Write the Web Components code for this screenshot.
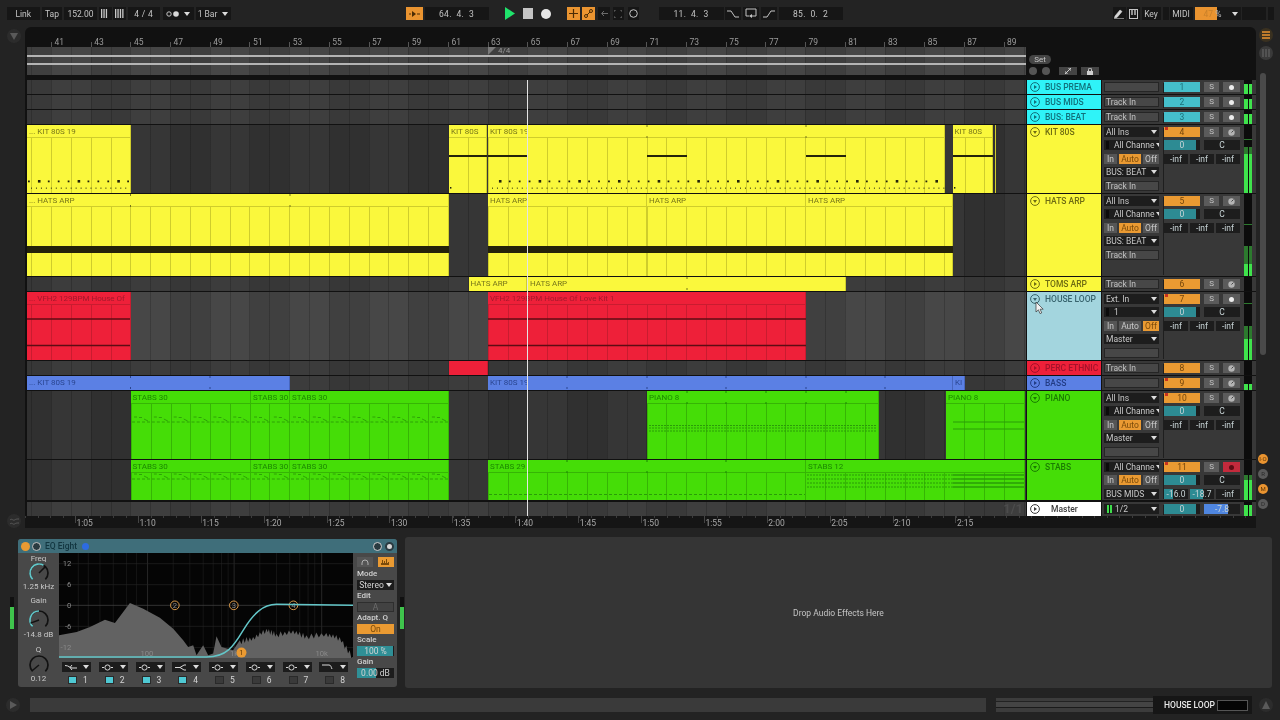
<!DOCTYPE html>
<html>
<head>
<meta charset="utf-8">
<title>Live set</title>
<style>
  html, body { margin: 0; padding: 0; background: #232323; overflow: hidden; }
</style>
</head>
<body>
<live-set>
  <top-bar></top-bar>
  <arrange-view>
    <track-row name="BUS PREMA" tint="cyan" h="14" lane="bus" inputs="~" num="1" numtint="cyan" arm="on" level="10"></track-row>
    <track-row name="BUS MIDS" tint="cyan" h="14" lane="bus" inputs="~Track In" num="2" numtint="cyan" arm="on" level="10"></track-row>
    <track-row name="BUS: BEAT" tint="cyan" h="14" lane="bus" inputs="~Track In" num="3" numtint="cyan" arm="on" level="10"></track-row>

    <track-row name="KIT 80S" tint="yellow" h="68" open inputs="All Ins|#All Channe|iao:Auto|BUS: BEAT|~Track In" num="4" mark arm="off" level="39" dim="7" peak="14" pan sends="-inf|-inf|-inf">
      <arr-clip from="27" to="130.5" tint="yellow" dots="full">... KIT 80S 19</arr-clip>
      <arr-clip from="449" to="486.5" tint="yellow" dots="one" lines="31:2:449-487">KIT 80S</arr-clip>
      <arr-clip from="488" to="945" tint="yellow" dots="full" ticks="647,806" lines="31:2:488-527,647-687,806-846">KIT 80S 19</arr-clip>
      <arr-clip from="952.5" to="993" tint="yellow" dots="one" lines="31:2:952-993">KIT 80S</arr-clip>
      <arr-clip from="994.5" to="996" tint="yellow"></arr-clip>
    </track-row>

    <track-row name="HATS ARP" tint="yellow" h="82" open inputs="All Ins|#All Channe|iao:Auto|BUS: BEAT|~Track In" num="5" arm="off" level="12" dim="18" peak="30" pan sends="-inf|-inf|-inf">
      <arr-clip from="27" to="449" tint="yellow" ticks="130.5,290" lines="55.5:7:27-449">... HATS ARP</arr-clip>
      <arr-clip from="488" to="647" tint="yellow" lines="55.5:7:488-647">HATS ARP</arr-clip>
      <arr-clip from="647" to="806" tint="yellow" lines="55.5:7:647-806">HATS ARP</arr-clip>
      <arr-clip from="806" to="952.5" tint="yellow" lines="55.5:7:806-953">HATS ARP</arr-clip>
    </track-row>

    <track-row name="TOMS ARP" tint="yellow" h="14" lane="mid" inputs="~Track In" num="6" arm="off">
      <arr-clip from="468.5" to="527" tint="yellow">HATS ARP</arr-clip>
      <arr-clip from="528" to="846" tint="yellow" ticks="687">HATS ARP</arr-clip>
    </track-row>

    <track-row name="HOUSE LOOP" tint="house" h="68" lane="light" open inputs="Ext. In|#1|iao:Off|Master|~" num="7" mark arm="on" level="21" dim="13" peak="11" pan sends="-inf|-inf|-inf">
      <arr-clip from="27" to="130.5" tint="red" lines="27:1.5:27-130;53.5:1.5:27-130">... VFH2 129BPM House Of</arr-clip>
      <arr-clip from="488" to="806" tint="red" lines="27:1.5:488-806;53.5:1.5:488-806">VFH2 129BPM House Of Love Kit 1</arr-clip>
    </track-row>

    <track-row name="PERC ETHNIC" tint="red" h="14" lane="mid" inputs="~Track In" num="8" arm="off">
      <arr-clip from="449" to="488" tint="red"></arr-clip>
    </track-row>

    <track-row name="BASS" tint="blue" h="14" lane="mid" inputs="~" num="9" mark arm="off" level="6">
      <arr-clip from="27" to="289.5" tint="blue" ticks="130.5,210">... KIT 80S 19</arr-clip>
      <arr-clip from="488" to="953" tint="blue" ticks="567,647,726,806,885">KIT 80S 19</arr-clip>
      <arr-clip from="953" to="965" tint="blue">KI</arr-clip>
    </track-row>

    <track-row name="PIANO" tint="green" h="68" open inputs="All Ins|#All Channe|iao:Auto|Master|~" num="10" mark arm="off" pan sends="-inf|-inf|-inf">
      <arr-clip from="130.5" to="251" tint="green" wave="26:31">STABS 30</arr-clip>
      <arr-clip from="251" to="290" tint="green" wave="26:31">STABS 30</arr-clip>
      <arr-clip from="290" to="449" tint="green" wave="26:31">STABS 30</arr-clip>
      <arr-clip from="647" to="879" tint="green" ticks="687,726,766,806,846" lines="34.5:1:649-877:2 1;37:1:649-877:2 1;40:1:649-877:2 1">PIANO 8</arr-clip>
      <arr-clip from="946" to="1025" tint="green" lines="31:1:953-1024;38:1:953-1024">PIANO 8</arr-clip>
    </track-row>

    <track-row name="STABS" tint="green" h="40" open inputs="#All Channe|iao:Auto|BUS MIDS" num="11" mark arm="red" level="20" dim="5" pan="short" sends="-16.0:38|-18.7:55|-inf" tight>
      <arr-clip from="130.5" to="251" tint="green" wave="14:19">STABS 30</arr-clip>
      <arr-clip from="251" to="290" tint="green" wave="14:19">STABS 30</arr-clip>
      <arr-clip from="290" to="449" tint="green" wave="14:19">STABS 30</arr-clip>
      <arr-clip from="488" to="806" tint="green" ticks="567,647,726" lines="34.5:1:489-805:3 2">STABS 29</arr-clip>
      <arr-clip from="806" to="1025" tint="green" lines="15:1:807-953:2 1;19:1:807-953:2 1;23:1:807-953:2 1;27:1:807-953:2 1;15:1.5:953-1024;19:1.5:953-1024;23:1.5:953-1024;27:1.5:953-1024">STABS 12</arr-clip>
    </track-row>

    <track-row name="Master" tint="white" h="14" lane="bus" master></track-row>
  </arrange-view>
  <detail-view><eq-eight></eq-eight></detail-view>
  <status-bar></status-bar>
</live-set>

<script>
const FONT = '"Roboto", "Liberation Sans", sans-serif';
const TINTS = {
  yellow: { bg: "#faf83c", line: "#cfcd2c", text: "#77761a", mark: "#24230a" },
  red: { bg: "#ee2039", line: "#c91c30", text: "#a3182b", mark: "#5e0c14" },
  blue: { bg: "#5b80e4", line: "#4766bd", text: "#2a4590", mark: "#25396f" },
  green: { bg: "#45dd07", line: "#36b505", text: "#1b8702", mark: "#2a9c08" },
};
const HEADS = {
  cyan: { bg: "#2ff3f8", text: "#11707a" },
  yellow: { bg: "#faf83c", text: "#6e6c12" },
  house: { bg: "#a3d5de", text: "#38646e" },
  red: { bg: "#ee2039", text: "#a5122a" },
  blue: { bg: "#5b80e4", text: "#223c85" },
  green: { bg: "#45dd07", text: "#1a7c02" },
  white: { bg: "#ffffff", text: "#3a3a3a" },
};
const LANES = {
  bus: ["#3e3e3e", "#393939"],
  dark: ["#363636", "#303030"],
  mid: ["#3c3c3c", "#373737"],
  light: ["#474747", "#404040"],
};
const DOWN = `<svg width="6" height="4" viewBox="0 0 6 4"><path d="M0 0h6L3 4z" fill="#dcdcdc"/></svg>`;

// bars are 19.85px wide, bar 41 sits at x=51
function barLines(from, color) {
  const p = (((51 - from) % 19.85) + 19.85) % 19.85;
  return `repeating-linear-gradient(90deg,${color} ${p}px,${color} ${p + 1}px,transparent ${p + 1}px,transparent ${p + 19.85}px)`;
}
function barBands(a, b) {
  const p = 24;
  return `repeating-linear-gradient(90deg,${a} ${p}px,${a} ${p + 39.7}px,${b} ${p + 39.7}px,${b} ${p + 79.4}px)`;
}

class LiveEl extends HTMLElement {
  constructor() {
    super();
    this.attachShadow({ mode: "open" });
  }
  connectedCallback() {
    this.render();
  }
}

class LiveSet extends LiveEl {
  render() {
    this.shadowRoot.innerHTML = `
      <style>
        :host { display: flex; flex-direction: column; width: 1280px; height: 720px; background: #232323; color: #c8c8c8; font-family: ${FONT}; font-size: 8.5px; position: relative; overflow: hidden; filter: blur(.3px); }
        svg { position: absolute; left: 1035px; top: 301px; }
      </style>
      <slot></slot>
      <svg width="9" height="14" viewBox="0 0 9 14"><path d="M1 1v10l2.4-2.2 1.6 3.8 1.7-.7-1.6-3.7h3.1z" fill="#f2f2f2" stroke="#333" stroke-width=".7"/></svg>`;
  }
}

class TopBar extends LiveEl {
  render() {
    const cell = (w, ml, txt, cls = "") => `<div class="c ${cls}" style="width:${w}px;margin-left:${ml}px">${txt}</div>`;
    const bars = (n) => `<svg width="9" height="9" viewBox="0 0 9 9">${[...Array(n)].map((_, i) => `<rect x="${i * 2.4}" y="0" width="1.3" height="9" fill="#c8c8c8"/>`).join("")}</svg>`;
    this.shadowRoot.innerHTML = `
      <style>
        :host { display: flex; height: 27px; box-sizing: border-box; padding-top: 7px; background: #232323; }
        .c { height: 13px; background: #161616; display: flex; align-items: center; justify-content: center; flex: none; font-size: 8.5px; color: #c4c4c4; white-space: nowrap; }
        .o { background: #ea9430; color: #3a2204; }
        .n { background: none; }
        .arrow { margin-left: 5px; display: flex; }
        pre { margin: 0; font: inherit; letter-spacing: .3px; }
      </style>
      ${cell(33.5, 6.5, "Link")}${cell(20, 2, "Tap")}${cell(33, 2, "152.00")}
      ${cell(13, 2, bars(3))}${cell(13, 1, bars(4))}
      ${cell(31.5, 2, "<pre>4 / 4</pre>")}
      ${cell(31, 3, `<svg width="13" height="6"><circle cx="3" cy="3" r="2.2" fill="none" stroke="#c4c4c4"/><circle cx="10" cy="3" r="2.8" fill="#d8d8d8"/></svg><span class="arrow">${DOWN}</span>`)}
      ${cell(35, 2, `1 Bar<span class="arrow">${DOWN}</span>`)}
      ${cell(16.5, 175.5, `<svg width="11" height="8"><path d="M0 4h2M8 4h3" stroke="#4a2c05"/><path d="M3 1l4 3-4 3z" fill="#4a2c05"/></svg>`, "o")}
      ${cell(64, 2, "<pre>64.  4.  3</pre>")}
      ${cell(10, 16, `<svg width="10" height="13"><path d="M0 0l10 6.5L0 13z" fill="#1fe36b"/></svg>`, "n")}
      ${cell(10, 8, `<svg width="10" height="11"><rect width="10" height="11" fill="#c4c4c4"/></svg>`, "n")}
      ${cell(10, 8, `<svg width="10" height="10"><circle cx="5" cy="5" r="5" fill="#e8e8e8"/></svg>`, "n")}
      ${cell(13, 16, `<svg width="9" height="9"><path d="M4.5 0v9M0 4.5h9" stroke="#4a2c05" stroke-width="1.2"/></svg>`, "o")}
      ${cell(13, 2, `<svg width="9" height="9"><circle cx="2" cy="7" r="1.5" fill="none" stroke="#4a2c05"/><circle cx="7" cy="2" r="1.5" fill="none" stroke="#4a2c05"/><path d="M3 6l3-3" stroke="#4a2c05"/></svg>`, "o")}
      ${cell(12, 3, `<svg width="8" height="7"><path d="M8 3.5H2M4 1L1.5 3.5 4 6" stroke="#6a6a6a" fill="none"/></svg>`)}
      ${cell(11, 3, `<svg width="8" height="8"><path d="M0 2V0h2M6 0h2v2M8 6v2H6M2 8H0V6" stroke="#6a6a6a" fill="none"/></svg>`)}
      ${cell(11, 4, `<svg width="9" height="9"><circle cx="4.5" cy="4.5" r="3.8" fill="none" stroke="#c4c4c4"/></svg>`)}
      ${cell(65, 20, "<pre>11.  4.  3</pre>")}
      ${cell(16, 1, `<svg width="12" height="8"><path d="M0 1h4l4 6h4" stroke="#c4c4c4" fill="none"/></svg>`)}
      ${cell(16, 2, `<svg width="12" height="11"><path d="M4 8H1V1h10v7H7" stroke="#c4c4c4" fill="none"/><path d="M7 6v4L4 8z" fill="#c4c4c4"/></svg>`)}
      ${cell(16, 2, `<svg width="12" height="8"><path d="M0 7h4l4-6h4" stroke="#c4c4c4" fill="none"/></svg>`)}
      ${cell(64, 2, "<pre>85.  0.  2</pre>")}
      ${cell(13, 270, `<svg width="10" height="10"><path d="M1 7l5-6 2 1.5-5 6-2.5.5zM0 9.6h10" stroke="#d8d8d8" fill="#d8d8d8" stroke-width=".6"/></svg>`)}
      ${cell(13, 1, `<svg width="9" height="10"><rect x=".5" y=".5" width="8" height="9" fill="none" stroke="#c4c4c4"/><path d="M3 0v6M6 0v6" stroke="#c4c4c4" stroke-width="1.4"/></svg>`)}
      ${cell(19, 2, "Key")}
      ${cell(6, 2, "")}
      ${cell(23, 1, "MIDI")}
      <div class="c" style="width:46px;margin-left:2px;justify-content:flex-start;background:linear-gradient(90deg,#ea9430 22px,#181818 22px)"><span style="margin-left:9px;color:#c9802a">47 <span style="color:#b8b8b8">%</span></span><span class="arrow" style="margin-left:11px">${DOWN}</span></div>
      ${cell(24, 1, "")}${cell(6, 2, "")}`;
  }
}

class ArrangeView extends LiveEl {
  render() {
    const tops = [];
    for (let b = 41; b <= 89; b += 2) tops.push(`<span>${b}</span>`);
    const times = ["1:05", "1:10", "1:15", "1:20", "1:25", "1:30", "1:35", "1:40", "1:45", "1:50", "1:55", "2:00", "2:05", "2:10", "2:15"].map((t) => `<span>${t}</span>`).join("");
    const bands = barBands("#464646", "#3f3f3f");
    this.shadowRoot.innerHTML = `
      <style>
        :host { display: flex; height: 501px; flex: none; position: relative; }
        .gutter { width: 25px; flex: none; display: flex; flex-direction: column; align-items: center; justify-content: space-between; padding: 2px 0 0 3px; box-sizing: border-box; }
        .round { width: 14px; height: 14px; border-radius: 50%; background: #2c2c2c; display: flex; align-items: center; justify-content: center; flex: none; }
        .panel { width: 1231px; flex: none; background: #111; border-radius: 6px 6px 0 0; display: flex; flex-direction: column; padding-left: 2px; box-sizing: border-box; position: relative; }
        .head { height: 53px; display: flex; flex: none; margin-left: -2px; }
        .time { width: 1001px; flex: none; }
        .ruler { height: 20px; display: flex; padding-left: 26px; font-size: 8.5px; color: #9a9a9a; }
        .ruler span { width: 39.7px; flex: none; box-sizing: border-box; padding: 10px 0 0 3.5px; line-height: 11px; height: 20px; background: linear-gradient(#555,#555) 0 bottom/1px 5px no-repeat; }
        .over { height: 28px; margin-left: 2px; width: 999px; background: ${barLines(27, "rgba(0,0,0,.16)")}, ${bands}; display: flex; flex-direction: column; position: relative; }
        .over i { display: block; height: 1.5px; background: #b4b4b4; margin-top: 8px; }
        .over i + i { margin-top: 6.5px; }
        .sig { position: absolute; left: 461px; top: 0; display: flex; gap: 2px; color: #9a9a9a; font-size: 8px; line-height: 8px; }
        .set { flex: 1; display: flex; flex-direction: column; padding: 27.5px 0 0 3px; box-sizing: border-box; }
        .pill { width: 22px; height: 9px; border-radius: 5px; background: #454545; color: #c4c4c4; font-size: 8px; line-height: 9px; text-align: center; }
        .btns { display: flex; align-items: center; margin-top: 3.5px; }
        .dot { width: 8px; height: 8px; border-radius: 50%; background: #555; margin-right: 5px; }
        .sq { width: 18px; height: 8px; background: #444; margin-right: 4px; display: flex; align-items: center; justify-content: center; }
        .rows { display: flex; flex-direction: column; gap: 1px; height: 436px; flex: none; }
        .times { height: 12px; display: flex; padding-left: 50px; margin-left: -2px; color: #a8a8a8; font-size: 8.5px; background: #151515; flex: none; background-image: repeating-linear-gradient(90deg,#3c3c3c 0 1px,transparent 1px 12.58px); background-size: 100% 2px; background-repeat: no-repeat; }
        .times span { width: 62.9px; flex: none; box-sizing: border-box; padding: 1px 0 0 1.5px; line-height: 12px; background: linear-gradient(#444,#444) 0 0/1px 7px no-repeat; height: 12px; }
        .play { position: absolute; left: 502px; top: 53px; width: 1px; height: 436px; background: #e4e4e4; }
        .rail { width: 24px; flex: none; display: flex; flex-direction: column; padding: 1px 0 0 3px; box-sizing: border-box; }
        .rail .round { background: #3a3a3a; }
        .scroll { width: 6px; height: 282px; margin: 13px 0 0 1px; border-radius: 3px; background: #4a4a4a; flex: none; }
        .led { width: 10px; height: 10px; border-radius: 50%; background: #5a5a5a; color: #2a2a2a; font-size: 6px; line-height: 10px; text-align: center; margin-top: 5px; margin-left: -1px; flex: none; }
        .led.on { background: #ea9430; color: #5a3305; }
      </style>
      <div class="gutter">
        <div class="round"><svg width="8" height="8"><path d="M0 1h8L4 8z" fill="#5a5a5a"/></svg></div>
        <div class="round" style="margin-bottom:0"><svg width="9" height="7"><path d="M0 2c2-2 3 1 4.5 0S7 1 9 1M0 6c2-2 3 1 4.5 0S7 5 9 5" stroke="#5a5a5a" fill="none"/></svg></div>
      </div>
      <div class="panel">
        <div class="head">
          <div class="time">
            <div class="ruler">${tops.join("")}</div>
            <div class="over"><i></i><i></i>
              <div class="sig"><svg width="8" height="8"><path d="M0 0h8L0 8z" fill="#7a7a7a"/></svg><span>4/4</span></div>
            </div>
          </div>
          <div class="set">
            <div class="pill">Set</div>
            <div class="btns">
              <div class="dot"></div><div class="dot" style="margin-right:9px"></div>
              <div class="sq"><svg width="6" height="6"><path d="M0 6l6-6M6 0H3M6 0v3M0 6h3M0 6V3" stroke="#cfcfcf" fill="none"/></svg></div>
              <div class="sq"><svg width="6" height="7"><rect y="3" width="6" height="4" fill="#cfcfcf"/><path d="M1.5 3V1.5a1.5 1.5 0 0 1 3 0V3" stroke="#cfcfcf" fill="none"/></svg></div>
            </div>
          </div>
        </div>
        <div class="rows"><slot></slot></div>
        <div class="times">${times}</div>
        <div class="play"></div>
      </div>
      <div class="rail">
        <div class="round" style="background:#3a3120"><svg width="8" height="8"><path d="M0 1h8M0 4h8M0 7h8" stroke="#ea9430" stroke-width="1.4"/></svg></div>
        <div class="round" style="margin-top:4px"><svg width="8" height="8"><path d="M1 0v8M4 0v8M7 0v8" stroke="#6a6a6a"/></svg></div>
        <div class="scroll"></div>
        <div class="led on" style="margin-top:99px">I·O</div>
        <div class="led">R</div>
        <div class="led on">M</div>
        <div class="led">D</div>
      </div>`;
  }
}

class TrackRow extends LiveEl {
  inputCell(spec) {
    if (spec.startsWith("iao:")) {
      const on = spec.slice(4);
      const w = { In: 13, Auto: 22, Off: 16 };
      return `<div class="iao">${["In", "Auto", "Off"].map((t) => `<b class="${t === on ? "act" : ""}" style="width:${w[t]}px">${t}</b>`).join("")}</div>`;
    }
    if (spec.startsWith("~")) return `<div class="box">${spec.slice(1)}</div>`;
    if (spec.startsWith("#")) return `<div class="dd ch"><u></u><span>${spec.slice(1)}</span><em>${DOWN}</em></div>`;
    return `<div class="dd"><span>${spec}</span><em>${DOWN}</em></div>`;
  }

  render() {
    const h = +this.getAttribute("h");
    const tint = this.getAttribute("tint");
    const head = HEADS[tint];
    const laneKey = this.getAttribute("lane") || "dark";
    const lane = LANES[laneKey];
    const isMaster = this.hasAttribute("master");
    const open = this.hasAttribute("open");
    const arrow = open ? `<path d="M3 4h4L5 7z" fill="${head.text}"/>` : `<path d="M4 3l3 2-3 2z" fill="${head.text}"/>`;
    const inputs = (this.getAttribute("inputs") || "").split("|").filter((s) => s !== "");
    const num = this.getAttribute("num");
    const cyan = this.getAttribute("numtint") === "cyan";
    const arm = this.getAttribute("arm");
    const armInner = arm === "red" ? `<i style="background:#5e0c14"></i>`
      : arm === "on" ? `<i style="background:#ececec"></i>`
      : `<svg width="7" height="7"><circle cx="3.5" cy="3.5" r="3.2" fill="#b4b4b4"/><path d="M3.5 3.5L5.5 1.5" stroke="#444"/></svg>`;
    const level = +this.getAttribute("level") || 0;
    const dim = +this.getAttribute("dim") || 0;
    const peak = this.getAttribute("peak");
    const sends = this.getAttribute("sends");
    const hasPan = this.hasAttribute("pan");
    const pan = hasPan ? `
      <div class="line">
        <div class="slider" style="width:36px;--fill:32px">0</div>
        <div class="slider plain" style="width:36px;margin-left:4px">C</div>
      </div>` : "";
    const sendRow = sends ? `<div class="line">${sends.split("|").map((s, i) => {
      const [t, fill] = s.split(":");
      return `<div class="slider ${fill ? "" : "plain"}" style="width:24px;margin-left:${i ? 2 : 0}px;--fill:${fill ? fill + "%" : "0"}">${t}</div>`;
    }).join("")}</div>` : "";

    const mixer = isMaster ? `
      <div class="inputs"><div class="dd" style="padding-left:0"><u style="width:5px;margin:0 3px 0 3px;background:linear-gradient(90deg,#3fdc4c 2px,#111 2px,#111 3px,#3fdc4c 3px)"></u><span>1/2</span><em>${DOWN}</em></div></div>
      <div class="main"><div class="line">
        <div class="slider" style="width:36px;--fill:32px">0</div>
        <div class="slider" style="width:36px;margin-left:4px;--fill:24px;--col:#4f86e0">-7.8</div>
      </div></div>` : `
      <div class="inputs">${inputs.map((s) => this.inputCell(s)).join("")}</div>
      <div class="main">
        <div class="line">
          <div class="num" style="background:${cyan ? "#45bfcb" : "#ea9a32"};color:${cyan ? "#1b6f78" : "#74450a"}">${this.hasAttribute("mark") ? "<s></s>" : ""}${num}</div>
          <div class="tog" style="width:15px;margin-left:4px">S</div>
          <div class="tog" style="width:17px;margin-left:4px;${arm === "red" ? "background:#c42a3c" : ""}">${armInner}</div>
        </div>
        ${pan}${sendRow}
      </div>`;

    const meterBright = isMaster ? 11 : level;
    this.shadowRoot.innerHTML = `
      <style>
        :host { display: flex; height: ${h}px; flex: none; ${isMaster ? "margin-top: 1px;" : ""} }
        .lane { width: 999px; flex: none; position: relative; overflow: hidden; background: ${barLines(27, "rgba(0,0,0,.18)")}, ${barBands(lane[0], lane[1])}; }
        .sig { position: absolute; right: 3px; top: 0; font-size: 13px; line-height: 14px; font-weight: 700; color: #4c4c4c; }
        .name { width: 74px; flex: none; margin-left: 1px; background: ${head.bg}; color: ${head.text}; display: flex; align-items: flex-start; padding: 2px 0 0 3px; box-sizing: border-box; font-size: 8.5px; line-height: 10px; font-weight: 500; white-space: nowrap; overflow: hidden; }
        .name svg { flex: none; margin-right: ${isMaster ? 11 : 5}px; }
        .mix { flex: none; width: 154px; margin-left: 1px; background: #383838; display: flex; padding: 2px 0 0 2px; box-sizing: border-box; }
        .inputs { width: 55px; flex: none; display: flex; flex-direction: column; gap: 3.4px; }
        .main { width: 76px; margin-left: 5px; flex: none; display: flex; flex-direction: column; gap: 3.4px; box-shadow: -2px 0 0 -1px #1e1e1e; }
        .dd, .box { height: 10px; flex: none; display: flex; align-items: center; box-sizing: border-box; font-size: 8.5px; color: #c8c8c8; white-space: nowrap; overflow: hidden; position: relative; }
        .dd { background: #1d1d1d; padding-left: 2px; }
        .dd span { flex: 1; }
        .dd em { font-style: normal; display: flex; padding: 0 2px 0 1px; background: #1d1d1d; }
        .dd u { width: 3px; height: 8px; background: #0c0c0c; margin-right: 5px; flex: none; }
        .box { background: #474747; border: 1px solid #252525; padding-left: 1px; color: #c0c0c0; }
        .iao { display: flex; gap: 2px; height: 10px; }
        .iao b { font-weight: 400; height: 10px; background: #555; color: #c8c8c8; font-size: 8.5px; line-height: 10px; text-align: center; flex: none; }
        .iao b.act { background: #ea9a32; color: #7a4a0a; }
        .line { display: flex; height: 10px; flex: none; }
        .num { width: 36px; height: 10px; line-height: 10px; text-align: center; font-size: 8.5px; flex: none; position: relative; }
        .num s { position: absolute; left: 1px; top: 0; width: 3px; height: 3px; background: #c8321e; }
        .tog { height: 10px; background: #5b5b5b; color: #c4c4c4; font-size: 8px; line-height: 10px; text-align: center; flex: none; display: flex; align-items: center; justify-content: center; }
        .tog i { display: block; width: 5px; height: 5px; border-radius: 50%; }
        .slider { height: 10px; line-height: 10px; text-align: center; color: #c8d4d6; font-size: 8.5px; flex: none; background: linear-gradient(90deg, var(--col, #2d8b93) var(--fill, 0), #1d1d1d var(--fill, 0)); }
        .slider.plain { background: #1d1d1d; }
        .meter { width: 8px; flex: none; margin-left: 4px; margin-top: -2px; height: ${h}px; background: #0c0c0c; display: flex; gap: 1px; position: relative; }
        .meter div { flex: 1; background: linear-gradient(0deg, #3fe34c ${meterBright}px, #2c7a2e ${meterBright}px, #2c7a2e ${meterBright + dim}px, transparent ${meterBright + dim}px); }
        ${peak ? `.meter::after { content: ""; position: absolute; left: 0; right: 0; top: ${peak}px; height: 1px; background: #2c7a2e; }` : ""}
      </style>
      <div class="lane"><slot></slot>${isMaster ? `<span class="sig">1/1</span>` : ""}</div>
      <div class="name"><svg width="10" height="10"><circle cx="5" cy="5" r="4.4" fill="none" stroke="${head.text}"/>${arrow}</svg>${this.getAttribute("name")}</div>
      <div class="mix">
        ${mixer}
        <div class="meter"><div></div><div></div></div>
      </div>`;
  }
}

class ArrClip extends LiveEl {
  render() {
    const from = +this.getAttribute("from");
    const to = +this.getAttribute("to");
    const t = TINTS[this.getAttribute("tint")];
    const w = to - from;
    const short = this.parentElement.getAttribute("h") === "14";
    let marks = "";

    const dots = this.getAttribute("dots");
    if (dots === "full") {
      for (let i = 0, x = from + 1; x < to - 1; i++, x += 9.92) {
        if (from > 400 && x < 494) continue;
        const big = i % 4 === 1;
        marks += `<rect x="${x - from}" y="${big ? 55 : 55.5}" width="${big ? 2.6 : 1.8}" height="${big ? 2.6 : 1.8}" fill="${t.mark}"/>`;
      }
      for (let x = from + 4; x < to - 1; x += 4.96) {
        marks += `<rect x="${x - from}" y="62.5" width="1" height="1.4" fill="#55541a"/>`;
      }
    } else if (dots === "one") {
      marks += `<rect x="1" y="62" width="1.4" height="1.6" fill="${t.mark}"/>`;
    }

    // y:thickness:a-b,c-d:dash, y counted from the top of the lane
    (this.getAttribute("lines") || "").split(";").filter(Boolean).forEach((spec) => {
      const [y, th, ranges, dash] = spec.split(":");
      ranges.split(",").forEach((r) => {
        const [a, b] = r.split("-").map(Number);
        marks += `<path d="M${a - from} ${y}H${b - from}" stroke="${t.mark}" stroke-width="${th}" ${dash ? `stroke-dasharray="${dash}"` : ""} fill="none"/>`;
      });
    });

    // short dashes of a chord stab, one group per bar
    const wave = this.getAttribute("wave");
    if (wave) {
      const [y1, y2] = wave.split(":").map(Number);
      let d1 = "", d2 = "";
      for (let x = 0; x < w - 2; x += 19.85) {
        d1 += `M${x + 3} ${y1}h3M${x + 8} ${y1 + .5}h3M${x + 13} ${y1 + 2}l4 2`;
        d2 += `M${x + 1} ${y2}h3M${x + 6} ${y2}h3M${x + 11} ${y2}h3M${x + 16} ${y2}h3`;
      }
      marks += `<path d="${d1}${d2}" stroke="${t.mark}" stroke-width=".9" fill="none"/>`;
    }

    (this.getAttribute("ticks") || "").split(",").filter(Boolean).forEach((x) => {
      const px = +x - from;
      marks += `<path d="M${px} 0v2M${px} 11v2" stroke="${t.text}" stroke-width="1"/>`;
    });

    this.shadowRoot.innerHTML = `
      <style>
        :host { position: absolute; top: 0; bottom: 0; left: ${from - 27}px; width: ${w}px; background: ${t.bg}; overflow: hidden; display: flex; flex-direction: column; box-shadow: inset -1px 0 0 ${t.line}; }
        .title { height: ${short ? "100%" : "13px"}; flex: none; box-sizing: border-box; ${short ? "" : `border-bottom: 1px solid ${t.line};`} padding-left: 2px; color: ${t.text}; font-size: 8px; line-height: 14px; white-space: nowrap; overflow: hidden; }
        .body { flex: 1; background: ${barLines(from, t.line)}; }
        svg { position: absolute; left: 0; top: 0; }
      </style>
      <div class="title"><slot></slot></div>
      ${short ? "" : `<div class="body"></div>`}
      <svg width="${w}" height="90">${marks}</svg>`;
  }
}

class DetailView extends LiveEl {
  render() {
    const meter = `<div class="meter"><i></i></div>`;
    this.shadowRoot.innerHTML = `
      <style>
        :host { display: flex; height: 162px; flex: none; padding: 9px 0 0 10px; box-sizing: border-box; }
        .meter { width: 4px; height: 32px; margin: 60px 4px 0 0; flex: none; background: #111; display: flex; align-items: flex-end; }
        .meter i { display: block; width: 100%; height: 22px; background: #3fc44c; }
        .dev { flex: none; width: 379px; margin-top: 2px; }
        .r { margin: 60px 1px 0 3px; }
        .blank { width: 867px; height: 151px; flex: none; background: #353535; border-radius: 3px; display: flex; align-items: center; justify-content: center; color: #c4c4c4; font-size: 8.5px; padding-top: 0; }
      </style>
      ${meter}
      <div class="dev"><slot></slot></div>
      <div class="meter r"><i></i></div>
      <div class="blank">Drop Audio Effects Here</div>`;
  }
}

class EqKnob extends LiveEl {
  render() {
    const a = +this.getAttribute("from");
    const b = +this.getAttribute("to");
    const p = +this.getAttribute("ptr");
    const [top, g1, g2] = (this.getAttribute("gaps") || "0 0 0").split(" ");
    const pol = (deg, r) => {
      const rad = (deg * Math.PI) / 180;
      return `${(11 + r * Math.sin(rad)).toFixed(2)} ${(11 - r * Math.cos(rad)).toFixed(2)}`;
    };
    const arc = (s, e, col) => `<path d="M${pol(s, 9)}A9 9 0 ${e - s > 180 ? 1 : 0} 1 ${pol(e, 9)}" fill="none" stroke="${col}" stroke-width="1.7"/>`;
    const teal = b > a ? arc(a, b, "#63c6c8") : "";
    this.shadowRoot.innerHTML = `
      <style>
        :host { display: flex; flex-direction: column; align-items: center; flex: none; margin-top: ${top}px; color: #c8c8c8; font-size: 8px; line-height: 9px; }
        svg { display: block; margin: ${g1}px 0 ${g2}px; flex: none; overflow: visible; }
        span { white-space: nowrap; height: 9px; }
      </style>
      <span>${this.getAttribute("label")}</span>
      <svg width="22" height="22">${arc(-135, 135, "#121212")}${teal}<path d="M11 11L${pol(p, 9)}" stroke="#121212" stroke-width="1.5"/></svg>
      <span>${this.getAttribute("value")}</span>`;
  }
}

class EqEight extends LiveEl {
  render() {
    const icons = {
      cut: `<path d="M1 1.5c4 0 5 2.5 7 2.5h5" stroke="#d8d8d8" fill="none"/><path d="M8 1l-2 2.5 2 2.5" stroke="#d8d8d8" fill="none"/>`,
      bell: `<path d="M1 3.5h2M10 3.5h2" stroke="#d8d8d8"/><circle cx="6.5" cy="3.5" r="2.6" fill="none" stroke="#d8d8d8"/>`,
      low: `<path d="M1 3.5h5l4-2.5h2M6 3.5l4 2.5h2" stroke="#d8d8d8" fill="none"/>`,
      shelf: `<path d="M1 1h7c2 0 2 2 3 4" stroke="#d8d8d8" fill="none"/>`,
    };
    const kinds = ["cut", "bell", "bell", "low", "bell", "bell", "bell", "shelf"];
    const slots = kinds.map((k, i) => `
      <div class="slot">
        <div class="fdd"><svg width="14" height="7">${icons[k]}</svg><em>${DOWN}</em></div>
        <div class="chk"><i class="${i < 4 ? "on" : ""}"></i><span>${i + 1}</span></div>
      </div>`).join("");
    const vlines = [235, 265, 300, 340, 380, 410, 443, 520, 570, 610, 640, 665, 685, 703, 780, 830, 870, 900, 925, 945, 966].map((x) => `<path d="M${x} 68V383" stroke="${x === 443 || x === 703 || x === 966 ? "#3a3a3a" : "#1e1e1e"}" stroke-width="2"/>`).join("");
    const hlines = [100, 163, 225, 288, 352].map((y) => `<path d="M177 ${y}H1060" stroke="${y === 225 ? "#4a4a4a" : "#242424"}" stroke-width="2"/>`).join("");
    const dbs = [["12", 100], ["6", 163], ["0", 225], ["-6", 288], ["-12", 352]].map(([t, y]) => `<text x="214" y="${y + 8}" text-anchor="end">${t}</text>`).join("");
    // spectrum outline, made jagged above the low end
    const base = [[177,315],[230,305],[270,290],[315,268],[345,278],[390,218],[430,235],[480,262],[520,295],[550,330],[565,350],[580,345],[590,375],[610,345],[625,375],[640,370],[650,318],[665,350],[700,360],[720,330],[760,320],[800,295],[830,310],[880,300],[920,315],[980,308],[1020,320],[1060,380]];
    const pts = [];
    base.forEach(([x, y], i) => {
      pts.push(`${x},${y}`);
      if (x >= 720 && i < base.length - 1) {
        const [nx, ny] = base[i + 1];
        for (let k = 1; k < 8; k++) {
          const px = x + ((nx - x) * k) / 8;
          const py = y + ((ny - y) * k) / 8 + (k % 2 ? 9 : -5) + ((k * 7 + i * 3) % 5);
          pts.push(`${px.toFixed(1)},${py.toFixed(1)}`);
        }
      }
    });
    pts.push("1060,383", "177,383");
    const node = (x, n) => `<circle cx="${x}" cy="225" r="13" fill="#000" fill-opacity=".2" stroke="#d99a4a" stroke-width="3"/><text x="${x}" y="232" text-anchor="middle" fill="#d99a4a">${n}</text>`;
    this.shadowRoot.innerHTML = `
      <style>
        :host { display: flex; flex-direction: column; width: 379px; height: 148px; background: #484848; border-radius: 3px; overflow: hidden; font-size: 8px; color: #d0d0d0; }
        .bar { height: 14px; flex: none; background: #3f6e7a; display: flex; align-items: center; padding: 0 3px 0 3px; color: #123640; font-size: 8.5px; font-weight: 500; }
        .ball { width: 9px; height: 9px; border-radius: 50%; flex: none; margin-right: 2px; }
        .main { display: flex; flex: 1; }
        .knobs { width: 41px; flex: none; display: flex; flex-direction: column; box-sizing: border-box; padding-top: .5px; }
        .mid { width: 294px; flex: none; display: flex; flex-direction: column; }
        .graph { height: 105px; flex: none; background: #050505; }
        .graph svg { display: block; }
        .graph text { font-family: ${FONT}; font-size: 23px; fill: #8a8a8a; }
        .filters { display: flex; flex: 1; }
        .slot { width: 36.75px; flex: none; padding: 4px 0 0 3px; box-sizing: border-box; }
        .fdd { width: 29px; height: 10px; background: #1c1c1c; display: flex; align-items: center; justify-content: space-between; padding-left: 2px; box-sizing: border-box; }
        .fdd em { font-style: normal; display: flex; padding-right: 2px; }
        .chk { display: flex; align-items: center; margin: 3px 0 0 6px; height: 9px; }
        .chk i { display: block; width: 9px; height: 8px; background: #3a3a3a; border: 1px solid #2a2a2a; box-sizing: border-box; }
        .chk i.on { background: #4fc9d4; }
        .chk span { margin-left: 6px; font-size: 8.5px; color: #d4d4d4; }
        .right { flex: 1; padding: 4px 3px 0 4px; display: flex; flex-direction: column; }
        .right label { display: block; height: 8px; line-height: 8px; margin-top: 2.5px; font-weight: 500; font-size: 8px; white-space: nowrap; flex: none; }
        .pair { display: flex; justify-content: space-between; height: 10px; flex: none; margin-bottom: .5px; }
        .pair div { width: 16px; height: 10px; background: #555; display: flex; align-items: center; justify-content: center; }
        .pair div + div { background: #ea9a32; }
        .f { height: 10px; margin-top: 1.5px; font-size: 8.5px; line-height: 10px; text-align: center; flex: none; color: #d4d4d4; }
        .f.dd { background: #1c1c1c; display: flex; align-items: center; justify-content: center; gap: 2px; }
      </style>
      <div class="bar">
        <div class="ball" style="background:#ea9a32"></div>
        <div class="ball" style="background:#2a3a40;border:1px solid #c4c4c4;box-sizing:border-box"></div>
        <span style="margin-left:2px;margin-right:5px">EQ Eight</span>
        <div class="ball" style="background:#2d6be0;width:7px;height:7px"></div>
        <div style="flex:1"></div>
        <div class="ball" style="background:#2a3a40;border:1px solid #d0d0d0;box-sizing:border-box;margin-right:3px"></div>
        <div class="ball" style="background:#d8d8d8;border:2px solid #2a3a40;box-sizing:border-box;margin:0"></div>
      </div>
      <div class="main">
        <div class="knobs">
          <eq-knob label="Freq" value="1.25 kHz" from="-135" to="30" ptr="45" gaps="0 -.5 -2.5"></eq-knob>
          <eq-knob label="Gain" value="-14.8 dB" from="-135" to="0" ptr="-110" gaps="5 4.5 -1.5"></eq-knob>
          <eq-knob label="Q" value="0.12" from="0" to="0" ptr="-130" gaps="6 .5 -2.5"></eq-knob>
        </div>
        <div class="mid">
          <div class="graph">
            <svg width="294" height="105" viewBox="177 68 883 315">
              ${vlines}${hlines}
              <polygon points="${pts.join(" ")}" fill="#626262"/>
              ${dbs}
              <text x="441" y="378" text-anchor="middle">100</text>
              <text x="703" y="378" text-anchor="middle">1k</text>
              <text x="966" y="378" text-anchor="middle">10k</text>
              ${node(525, 2)}${node(702, 3)}${node(881, 4)}
              <path d="M177 380H620C680 380 700 350 730 300C760 250 790 222 830 222L1060 225" fill="none" stroke="#63c6c8" stroke-width="4.5"/>
              <circle cx="725" cy="367" r="15" fill="#ea9a32"/>
              <text x="725" y="375" text-anchor="middle" style="fill:#6a3e06">1</text>
            </svg>
          </div>
          <div class="filters">${slots}</div>
        </div>
        <div class="right">
          <div class="pair">
            <div><svg width="8" height="7"><path d="M1 6V4a3 3 0 0 1 6 0v2" stroke="#b0b0b0" fill="none"/></svg></div>
            <div><svg width="10" height="6"><path d="M0 6V4h1V1h1v3h1V2h1v2h1V0h1v4h1V3h1v3z" fill="#7a4a0a"/></svg></div>
          </div>
          <label>Mode</label>
          <div class="f dd">Stereo ${DOWN}</div>
          <label>Edit</label>
          <div class="f" style="background:#424242;border:1px solid #2e2e2e;box-sizing:border-box;color:#6c6c6c;line-height:8px">A</div>
          <label>Adapt. Q</label>
          <div class="f" style="background:#ea9a32;color:#7a4a0a">On</div>
          <label>Scale</label>
          <div class="f" style="background:linear-gradient(90deg,#2f8f96 36px,#1c1c1c 36px)">100 %</div>
          <label>Gain</label>
          <div class="f" style="background:linear-gradient(90deg,#2f8f96 19px,#1c1c1c 19px)">0.00 dB</div>
        </div>
      </div>`;
  }
}

class StatusBar extends LiveEl {
  render() {
    this.shadowRoot.innerHTML = `
      <style>
        :host { display: flex; height: 30px; flex: none; box-sizing: border-box; padding: 8px 0 0 6px; background: #232323; }
        .round { width: 14px; height: 14px; border-radius: 50%; background: #2c2c2c; display: flex; align-items: center; justify-content: center; flex: none; }
        .bar { width: 956px; height: 14px; background: #3a3a3a; margin-left: 10px; flex: none; }
        .over { width: 157px; height: 14px; margin-left: 10px; flex: none; background: linear-gradient(#3c3c3c 0 3px, #222 3px 4px, #444 4px 9px, #1a1a1a 9px 10px, #3c3c3c 10px); }
        .tail { width: 99px; height: 18px; margin-top: -2px; background: #161616; flex: none; display: flex; align-items: center; color: #e8e8e8; font-size: 8.5px; font-weight: 500; padding-left: 11px; box-sizing: border-box; white-space: nowrap; }
        .mini { width: 31px; height: 11px; margin-left: 2px; background: #050505; border: 1px solid #555; box-sizing: border-box; flex: none; }
      </style>
      <div class="round"><svg width="8" height="8"><path d="M1 0l7 4-7 4z" fill="#5a5a5a"/></svg></div>
      <div class="bar"></div>
      <div class="over"></div>
      <div class="tail">HOUSE LOOP<div class="mini"></div></div>
      <div class="round" style="margin-left:7px"><svg width="8" height="8"><path d="M4 0l4 8H0z" fill="#5a5a5a"/></svg></div>`;
  }
}

customElements.define("live-set", LiveSet);
customElements.define("top-bar", TopBar);
customElements.define("arrange-view", ArrangeView);
customElements.define("track-row", TrackRow);
customElements.define("arr-clip", ArrClip);
customElements.define("detail-view", DetailView);
customElements.define("eq-knob", EqKnob);
customElements.define("eq-eight", EqEight);
customElements.define("status-bar", StatusBar);
</script>
</body>
</html>
